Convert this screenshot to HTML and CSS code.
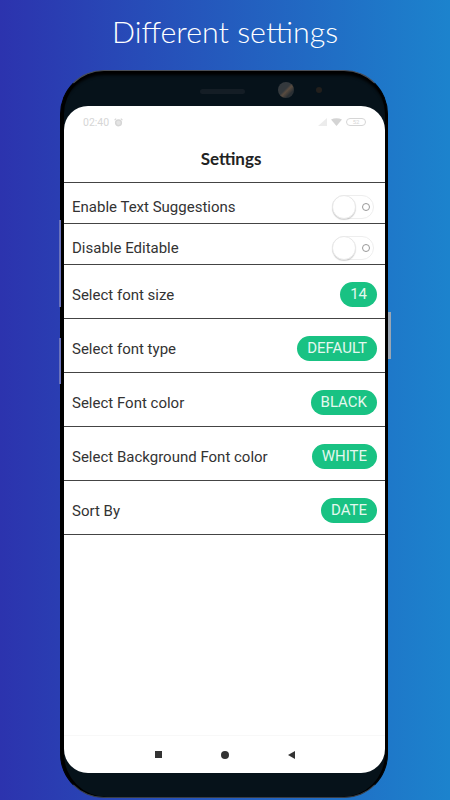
FILE: index.html
```html
<!DOCTYPE html>
<html>
<head>
  <title>Different settings</title>
  <link rel="stylesheet" href="styles.css">
</head>
<body>
  <div class="page">
    <h1 class="headline">Different settings</h1>
    <div class="phone">
      <span class="side-btn side-left-1"></span>
      <span class="side-btn side-left-2"></span>
      <span class="side-btn side-right"></span>
      <div class="bezel-top">
        <span class="speaker"></span>
        <span class="camera"></span>
        <span class="sensor"></span>
      </div>
      <div class="screen">
        <div class="statusbar">
          <div class="status-left">
            <span>02:40</span>
            <svg width="9" height="9" viewBox="0 0 10 10"><circle cx="5" cy="5.4" r="3.2" fill="#e4e4e4" stroke="#d6d6d6" stroke-width="1.6"/><path d="M0.6 2.4 2.4 0.7M9.4 2.4 7.6 0.7" stroke="#d6d6d6" stroke-width="1.2"/></svg>
          </div>
          <div class="status-right">
            <svg width="9" height="8" viewBox="0 0 9 8"><path d="M0 8 9 0V8Z" fill="#ececec"/></svg>
            <svg width="11" height="8" viewBox="0 0 11 8"><path d="M0 1.6Q5.500 -1.200 11 1.6L5.500 8Z" fill="#d4d4d4"/></svg>
            <span class="battery">52</span>
          </div>
        </div>
        <div class="appbar">Settings</div>
        <div class="list">
          <div class="row row-switch">
            <span>Enable Text Suggestions</span>
            <span class="switch"><span class="knob"></span><span class="off-dot"></span></span>
          </div>
          <div class="row row-switch">
            <span>Disable Editable</span>
            <span class="switch"><span class="knob"></span><span class="off-dot"></span></span>
          </div>
          <div class="row">
            <span class="row-label">Select font size</span>
            <span class="pill">14</span>
          </div>
          <div class="row">
            <span class="row-label">Select font type</span>
            <span class="pill">DEFAULT</span>
          </div>
          <div class="row">
            <span class="row-label">Select Font color</span>
            <span class="pill">BLACK</span>
          </div>
          <div class="row">
            <span class="row-label">Select Background Font color</span>
            <span class="pill">WHITE</span>
          </div>
          <div class="row">
            <span class="row-label">Sort By</span>
            <span class="pill">DATE</span>
          </div>
        </div>
        <div class="navbar">
          <span class="nav-square"></span>
          <span class="nav-circle"></span>
          <span class="nav-back"></span>
        </div>
      </div>
    </div>
  </div>
</body>
</html>
```

FILE: styles.css
```css
html, body {
  margin: 0;
  padding: 0;
}
.page {
  width: 450px;
  height: 800px;
  overflow: hidden;
  box-sizing: border-box;
  padding-top: 12px;
  background: linear-gradient(90deg, #2c33ae 0%, #1c83cd 100%);
  font-family: Lato, sans-serif;
}
.headline {
  margin: 0;
  height: 38px;
  line-height: 38px;
  text-align: center;
  color: #fff;
  font-size: 30.4px;
  font-weight: 300;
}
.phone {
  position: relative;
  box-sizing: border-box;
  width: 328px;
  height: 728px;
  margin: 20px 0 0 60px;
  padding: 0 2px 24px 3px;
  display: flex;
  flex-direction: column;
  background: #06121a;
  border-top: 1px solid #4a4f58;
  border-left: 1px solid #000;
  border-right: 1px solid #000;
  border-bottom: 1px solid #3a3e44;
  border-radius: 44px;
  box-shadow: inset 3px 0 0 #000, inset -2px 0 0 #000, inset 0 4px 3px #000;
}
.side-btn {
  position: absolute;
  left: -2px;
  width: 1.5px;
  background: #6a72bc;
}
.side-left-1 {
  top: 149px;
  height: 87px;
}
.side-left-2 {
  top: 267px;
  height: 46px;
}
.side-right {
  left: auto;
  right: -4px;
  top: 241px;
  width: 3px;
  height: 47px;
  background: #9aa6b4;
}
.bezel-top {
  position: relative;
  height: 35px;
  flex: none;
}
.speaker {
  position: absolute;
  left: 136px;
  top: 18px;
  width: 45px;
  height: 5px;
  border-radius: 3px;
  background: #141d25;
}
.camera {
  position: absolute;
  left: 214px;
  top: 11px;
  width: 16px;
  height: 16px;
  border-radius: 50%;
  background: linear-gradient(135deg, #34393d 45%, #5a4c40 55%, #2b3034 75%);
}
.sensor {
  position: absolute;
  left: 252px;
  top: 16px;
  width: 6px;
  height: 6px;
  border-radius: 50%;
  background: #221f1c;
}
.screen {
  flex: 1;
  display: flex;
  flex-direction: column;
  background: #fff;
  border-radius: 24px;
  overflow: hidden;
}
.statusbar {
  height: 32px;
  flex: none;
  box-sizing: border-box;
  padding: 0 19px;
  display: flex;
  align-items: center;
  justify-content: space-between;
  color: #d6d6d6;
  font-family: Roboto, sans-serif;
  font-size: 10.5px;
}
.status-left {
  display: flex;
  align-items: center;
  gap: 5px;
}
.status-right {
  display: flex;
  align-items: center;
  gap: 4px;
}
.battery {
  box-sizing: border-box;
  width: 20px;
  height: 8px;
  border: 1px solid #d6d6d6;
  border-radius: 4px;
  font-size: 6px;
  line-height: 6px;
  text-align: center;
}
.appbar {
  height: 44px;
  flex: none;
  box-sizing: border-box;
  padding: 0 0 4px 13px;
  display: flex;
  align-items: center;
  justify-content: center;
  color: #222;
  font-size: 17px;
  font-weight: 700;
}
.list {
  flex: 1;
  border-top: 1px solid #444;
}
.row {
  box-sizing: border-box;
  height: 54px;
  padding: 6px 8px 0;
  display: flex;
  align-items: center;
  justify-content: space-between;
  border-bottom: 1px solid #444;
  color: #333;
  font-family: Roboto, sans-serif;
  font-size: 15px;
}
.row-label {
  padding-top: 1px;
}
.row-switch {
  height: 41px;
  padding-top: 8px;
  padding-right: 11px;
}
.switch {
  position: relative;
  box-sizing: border-box;
  width: 42px;
  height: 24px;
  border: 1px solid #eee;
  border-radius: 12px;
  background: #fff;
}
.knob {
  position: absolute;
  left: -1px;
  top: -1px;
  box-sizing: border-box;
  width: 24px;
  height: 24px;
  border-radius: 50%;
  background: #fff;
  border: 1px solid #e8e8e8;
  box-shadow: 0 1px 1px rgba(0, 0, 0, 0.18);
}
.off-dot {
  position: absolute;
  right: 3px;
  top: 7px;
  box-sizing: border-box;
  width: 8px;
  height: 8px;
  border: 1.5px solid #999;
  border-radius: 50%;
}
.pill {
  height: 25px;
  line-height: 24px;
  min-width: 13px;
  padding: 0 10px;
  border-radius: 13px;
  background: #19c283;
  color: #e4f8ef;
  font-size: 15px;
  text-align: center;
}
.navbar {
  height: 37px;
  flex: none;
  display: flex;
  align-items: center;
  justify-content: center;
  gap: 59px;
  border-top: 1px solid #f8f8f8;
}
.nav-square {
  width: 7px;
  height: 7px;
  background: #333;
}
.nav-circle {
  width: 8px;
  height: 8px;
  border-radius: 50%;
  background: #333;
}
.nav-back {
  width: 0;
  height: 0;
  border-top: 4px solid transparent;
  border-bottom: 4px solid transparent;
  border-right: 7px solid #333;
}
```
